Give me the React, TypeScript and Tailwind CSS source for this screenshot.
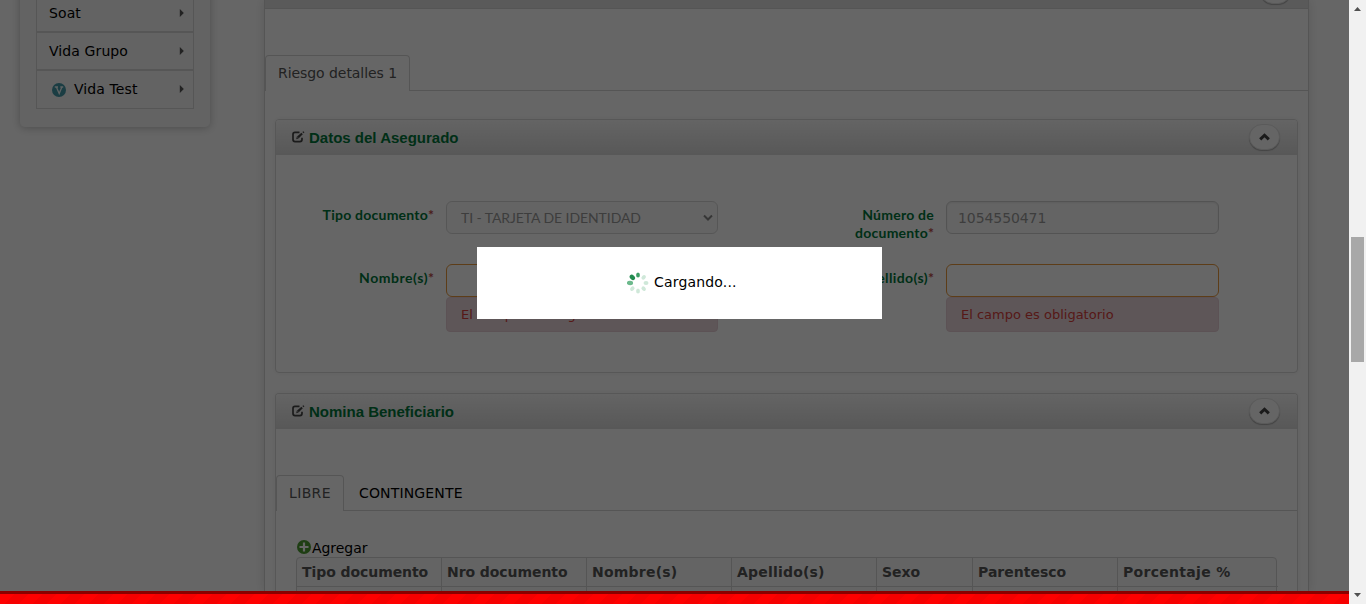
import React from "react";

const sans = "font-['DejaVu_Sans',Verdana,sans-serif]";

function Caret() {
  return (
    <svg width="5" height="8" viewBox="0 0 5 8" className="shrink-0">
      <path d="M0.8 0L4.8 4L0.8 8Z" fill="#555" />
    </svg>
  );
}

function EditIcon() {
  return (
    <svg width="13" height="12" viewBox="0 0 13 12" className="mb-px shrink-0" fill="none" stroke="#444">
      <path d="M7.5 1.4H3Q1 1.4 1 3.4V8.6Q1 10.6 3 10.6H8Q10 10.6 10 8.6V6.8" strokeWidth="1.7" />
      <path d="M4.2 8.2L4.8 5.8L9.4 1.8L10.8 3.2L6.5 7.4Z" fill="#444" stroke="none" />
      <path d="M5.3 6L6.6 7.2" stroke="#eee" strokeWidth=".6" />
      <path d="M10.3 1L11.7 2.3L12.4 1.3L11.4 .3Z" fill="#444" stroke="none" />
    </svg>
  );
}

function RoundButton() {
  return (
    <div className="flex h-[26px] w-[31px] items-center justify-center rounded-full border border-[#e2e2e2] bg-[#fcfcfc] shadow-[0_1px_1px_rgba(0,0,0,0.25)]">
      <svg width="11" height="8" viewBox="0 0 11 8">
        <path d="M1.2 6.3L5.5 2.2L9.8 6.3" fill="none" stroke="#444" strokeWidth="3" />
      </svg>
    </div>
  );
}

function PanelHeader({ title }: { title: string }) {
  return (
    <div className="flex h-[35px] items-center justify-between rounded-t-[3px] bg-linear-to-b from-[#fafafa] to-[#dcdcdc] pb-px pl-4 pr-[17px]">
      <div className="flex items-center gap-1 font-['Liberation_Sans',Arial,sans-serif] text-[15px] font-bold text-[#00763a]">
        <EditIcon />
        <span className="pt-[2px]">{title}</span>
      </div>
      <RoundButton />
    </div>
  );
}

function Label({ children }: { children: React.ReactNode }) {
  return (
    <div className="w-[118px] shrink-0 pt-[5px] text-right font-['Lato',sans-serif] text-[14px] font-bold leading-[18px] tracking-[0.24px] text-[#00763a]">
      {children}
      <span className="tracking-normal text-[#b94a48]">*</span>
    </div>
  );
}

function ErrorBox() {
  return (
    <div className="flex h-[35px] items-center rounded-[4px] border border-[#e6cdd5] bg-[#ead6dc] pl-[14px] text-[13px] text-[#d8403a]">
      <span>El campo es obligatorio</span>
    </div>
  );
}

function MenuItem({ text, last = false }: { text: string; last?: boolean }) {
  return (
    <div
      className={`flex shrink-0 items-center justify-between border border-[#d8d8d8] pl-3 pr-[9px] ${last ? "h-[39px] pb-px" : "h-[38px]"}`}
    >
      <div className="flex items-center">
        {last && (
          <svg width="14" height="14" viewBox="0 0 14 14" className="ml-[3px] mr-2 mt-[2px]">
            <circle cx="7" cy="7" r="7" fill="#4499a8" />
            <path d="M2.8 4H6M8.3 4H11.2M4.4 4L7.2 10.6L9.9 4" fill="none" stroke="#eef6f7" strokeWidth="1.3" />
          </svg>
        )}
        <span className="tracking-[0.1px]">{text}</span>
      </div>
      <Caret />
    </div>
  );
}

function Sidebar() {
  return (
    <div className="ml-5 mt-[-20px] h-[147px] w-[190px] shrink-0 rounded-[5px] bg-[#f7f7f7] px-4 pt-[14px] text-[14px] text-black shadow-[0_1px_8px_rgba(0,0,0,0.25)]">
      <MenuItem text="Soat" />
      <MenuItem text="Vida Grupo" />
      <MenuItem text="Vida Test" last />
    </div>
  );
}

function Spinner() {
  const petals = ["#3e9e66", "#cfe8d9", "#cfe8d9", "#cfe8d9", "#cfe8d9", "#cfe8d9", "#6cb98c", "#228b50"];
  return (
    <svg width="22" height="22" viewBox="-11 -11 22 22">
      {petals.map((c, i) => (
        <ellipse key={i} cx="0" cy="-8" rx={i > 5 ? 2.2 : 1.9} ry={i > 5 ? 3.1 : 2.5} fill={c} transform={`rotate(${i * 45})`} />
      ))}
    </svg>
  );
}

function InsuredPanel() {
  return (
    <div className="h-[254px] rounded-[4px] border border-[#d9d9d9] shadow-[0_0_5px_rgba(0,0,0,0.06)]">
      <PanelHeader title="Datos del Asegurado" />
      <div className="grid grid-cols-[500px_1fr] pl-[40px] pt-[46px]">
        <div className="flex h-[63px] gap-3">
          <Label>Tipo documento</Label>
          <div className="flex h-[33px] w-[272px] items-center justify-between rounded-[6px] border border-[#d8d8d8] bg-[#fbfbfb] pl-[14px] pr-1 font-['Lato',sans-serif] text-[14px] text-[#999]">
            <span className="-tracking-[0.08px]">TI - TARJETA DE IDENTIDAD</span>
            <svg width="10" height="8" viewBox="0 0 10 8">
              <path d="M1 1.5L5 5.5L9 1.5" fill="none" stroke="#888" strokeWidth="2" />
            </svg>
          </div>
        </div>
        <div className="flex h-[63px] gap-3">
          <Label>Número de documento</Label>
          <div className="flex h-[33px] w-[273px] items-center rounded-[6px] border border-[#d0d0d0] bg-[#fbfbfb] pl-[11px] pt-px text-[14px] text-[#999] shadow-[inset_0_1px_2px_rgba(0,0,0,0.08)]">
            <span className="-tracking-[0.08px]">1054550471</span>
          </div>
        </div>
        <div className="flex gap-3">
          <Label>
            <span className="tracking-[0.55px]">Nombre(s)</span>
          </Label>
          <div className="w-[272px]">
            <div className="h-[33px] rounded-[6px] border border-[#e8983e]" />
            <ErrorBox />
          </div>
        </div>
        <div className="flex gap-3">
          <Label>
            <span className="tracking-[0.4px]">Apellido(s)</span>
          </Label>
          <div className="w-[273px]">
            <div className="h-[33px] rounded-[6px] border border-[#e8983e]" />
            <ErrorBox />
          </div>
        </div>
      </div>
    </div>
  );
}

function BeneficiaryPanel() {
  const columns = ["Tipo documento", "Nro documento", "Nombre(s)", "Apellido(s)", "Sexo", "Parentesco", "Porcentaje %"];
  const spacing = ["-tracking-[0.07px]", "-tracking-[0.07px]", "tracking-[0.22px]", "tracking-[0.2px]", "tracking-normal", "tracking-normal", "tracking-[0.3px]"];
  return (
    <div className="mt-5 h-[240px] rounded-t-[4px] border border-b-0 border-[#d9d9d9] shadow-[0_0_5px_rgba(0,0,0,0.06)]">
      <PanelHeader title="Nomina Beneficiario" />
      <div className="mt-[46px] flex h-9 text-[14px]">
        <div className="flex w-[68px] items-center rounded-t-[4px] border border-b-0 border-[#d5d5d5] pl-3 text-[#555]">
          <span className="tracking-[0.35px]">LIBRE</span>
        </div>
        <div className="flex flex-1 items-center border-b border-[#d5d5d5] pl-[15px] pt-px text-black">
          <span className="tracking-[0.15px]">CONTINGENTE</span>
        </div>
      </div>
      <div className="ml-[20px] mt-[28px] flex h-[18px] items-center text-[14px] text-black">
        <svg width="16" height="16" viewBox="0 0 16 16" className="mt-[-2px] shrink-0">
          <circle cx="8" cy="8" r="7" fill="#4c9c30" />
          <path d="M8 3.5V12.5M3.5 8H12.5" stroke="#fff" strokeWidth="2.2" />
        </svg>
        <span className="-tracking-[0.05px]">Agregar</span>
      </div>
      <div className="ml-[20px] grid h-[60px] w-[981px] grid-cols-[145px_145px_145px_145px_96px_145px_160px] grid-rows-[28px_32px] rounded-t-[4px] border border-[#d5d5d5] bg-[#fafafa] text-[14px] font-bold text-[#555]">
        {columns.map((c, i) => (
          <div key={c} className={`flex items-center pl-[5px] ${i < 6 ? "border-r border-[#d5d5d5]" : ""}`}>
            <span className={spacing[i]}>{c}</span>
          </div>
        ))}
        {columns.map((c, i) => (
          <div key={c + i} className={`border-t border-[#d5d5d5] ${i < 6 ? "border-r" : ""}`} />
        ))}
      </div>
    </div>
  );
}

export default function App() {
  return (
    <div className={`flex h-[604px] w-[1366px] overflow-hidden bg-white ${sans}`}>
      <div className="flex w-[1349px] flex-col">
        <div className="relative flex h-[591px] items-start overflow-hidden">
          <Sidebar />
          <div className="ml-[54px] h-[591px] w-[1045px] shrink-0 border-x border-[#d5d5d5] shadow-[0_0_10px_rgba(0,0,0,0.12)]">
            <div className="flex h-[9px] items-end justify-end border-b border-[#d5d5d5] bg-[#e2e2e2] pb-[4px] pr-[17px]">
              <RoundButton />
            </div>
            <div className="mt-[46px] flex h-9 text-[14px] text-[#555]">
              <div className="flex w-[145px] items-center rounded-t-[4px] border border-b-0 border-[#d5d5d5] pl-3">
                <span className="-tracking-[0.06px]">Riesgo detalles 1</span>
              </div>
              <div className="flex-1 border-b border-[#d5d5d5]" />
            </div>
            <div className="px-[10px] pt-7">
              <InsuredPanel />
              <BeneficiaryPanel />
            </div>
          </div>
          <div className="absolute inset-0 bg-black/60" />
          <div className="absolute left-[477px] top-[247px] flex h-[72px] w-[405px] items-center gap-[5px] bg-white pl-[150px] text-[14px] text-black">
            <Spinner />
            <span className="pb-[2px] tracking-[0.18px]">Cargando...</span>
          </div>
        </div>
        <div className="h-[13px] border-t-[3px] border-[#8b0000] bg-[repeating-linear-gradient(135deg,#ff0000_0px,#ff0000_10px,#f60000_10px,#f60000_20px)]" />
      </div>
      <div className="flex w-[17px] flex-col items-center bg-[#f1f1f1]">
        <svg width="7" height="4" viewBox="0 0 7 4" className="mt-[7px]">
          <path d="M0 4L3.5 0L7 4Z" fill="#505050" />
        </svg>
        <div className="mt-[226px] h-[125px] w-[13px] bg-[#a8a8a8]" />
        <svg width="7" height="4" viewBox="0 0 7 4" className="mt-[231px]">
          <path d="M0 0H7L3.5 4Z" fill="#505050" />
        </svg>
      </div>
    </div>
  );
}
